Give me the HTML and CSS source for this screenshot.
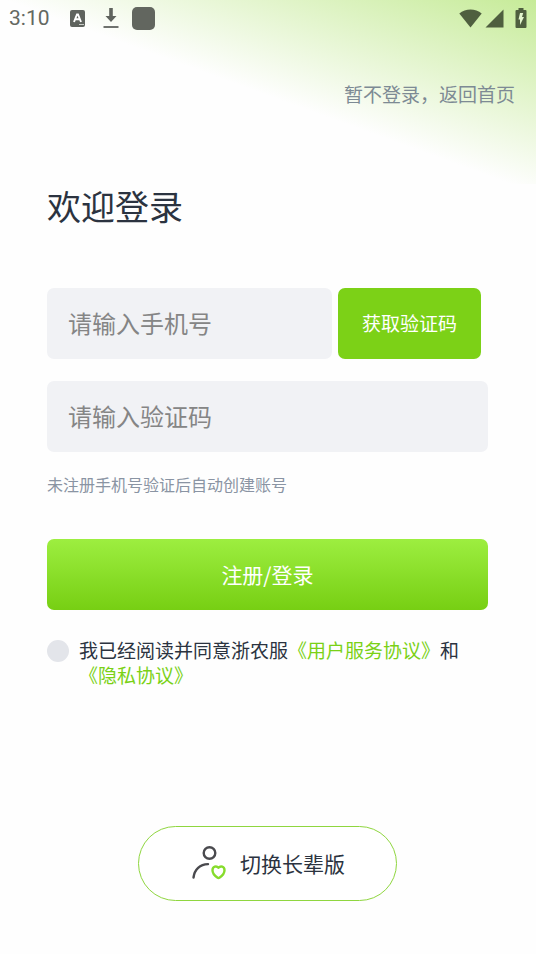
FILE: index.html
```html
<!DOCTYPE html>
<html lang="zh-CN">
<head>
<meta charset="utf-8">
<meta name="viewport" content="width=device-width, initial-scale=1">
<title>欢迎登录</title>
<link rel="stylesheet" href="styles.css">
</head>
<body>
<div class="page">
  <div class="status">
    <span class="status-time">3:10</span>
    <svg class="status-lang" width="15" height="17" viewBox="0 0 15 17" aria-hidden="true">
      <rect width="15" height="17" rx="2" fill="#5f635e"/>
      <path d="M4 12 7 4.500H8L11 12M5.300 9.300H9.700" fill="none" stroke="#fff" stroke-width="1.900"/>
      <path d="M9 14.500H14" stroke="#c8ccc6" stroke-width="1"/>
    </svg>
    <svg class="status-download" width="16" height="22" viewBox="0 0 16 22" aria-hidden="true">
      <path d="M6.200 1H9.800V9H13.500L8 15 2.500 9H6.200Z" fill="#5f635e"/>
      <path d="M.5 20H15.500" stroke="#5f635e" stroke-width="1.800"/>
    </svg>
    <span class="status-app"></span>
    <svg class="status-wifi" width="23" height="19" viewBox="0 0 23 19" aria-hidden="true">
      <path d="M.3 4.500C6.500-.7 16.500-.7 22.700 4.500L11.500 18.500Z" fill="#4f5f3f"/>
    </svg>
    <svg class="status-signal" width="19" height="19" viewBox="0 0 19 19" aria-hidden="true">
      <path d="M18.500.5V18.500H.5Z" fill="#4f5f3f"/>
    </svg>
    <svg class="status-battery" width="12" height="20" viewBox="0 0 12 20" aria-hidden="true">
      <path d="M3.500 0H8.500V2H10.500Q11.500 2 11.500 3V19Q11.500 20 10.500 20H1.500Q.5 20 .5 19V3Q.5 2 1.500 2H3.500Z" fill="#4f5f3f"/>
      <path d="M5 5H8.200L7 9H9L5 17V11.500H3.500Z" fill="#e3f5cd"/>
    </svg>
  </div>

  <nav class="skip"><a href="#">暂不登录，返回首页</a></nav>

  <main class="main">
    <h1 class="title">欢迎登录</h1>
    <form class="form">
      <div class="phone-row">
        <input class="field" type="tel" placeholder="请输入手机号" aria-label="手机号">
        <button class="code-button" type="button">获取验证码</button>
      </div>
      <input class="field" type="text" placeholder="请输入验证码" aria-label="验证码">
      <p class="hint">未注册手机号验证后自动创建账号</p>
      <button class="submit" type="submit">注册/登录</button>
      <div class="agree">
        <input class="agree-box" type="checkbox" id="agree">
        <label class="agree-text" for="agree">我已经阅读并同意浙农服<a href="#">《用户服务协议》</a>和<a href="#">《隐私协议》</a></label>
      </div>
    </form>
    <button class="switch" type="button">
      <svg width="34" height="34" viewBox="0 0 34 34" fill="none" stroke-linecap="round" aria-hidden="true">
        <circle cx="17.500" cy="7" r="5.800" stroke="#4a4a4e" stroke-width="2.400"/>
        <path d="M1.500 31.500C2.500 23.500 8 18.300 16 18.100" stroke="#4a4a4e" stroke-width="2.400"/>
        <path d="M26.500 21.800C24.500 19.500 20.500 20.300 20.500 24.300C20.500 27.800 23 30 25.300 31.600Q26.500 32.400 27.700 31.600C30 30 32.500 27.800 32.500 24.300C32.500 20.300 28.500 19.500 26.500 21.800Z" stroke="#86dc2c" stroke-width="2.400" stroke-linejoin="round"/>
      </svg>
      <span>切换长辈版</span>
    </button>
  </main>
</div>
</body>
</html>
```
FILE: styles.css
```css
* {
  box-sizing: border-box;
}

body {
  margin: 0;
  background: #fefefe;
  color: #2b3340;
  font-family: "Noto Sans CJK SC", sans-serif;
}

button,
input {
  margin: 0;
  border: 0;
  font: inherit;
}

button {
  padding: 0 0 2px;
}

a {
  color: #7ad116;
  text-decoration: none;
}

.page {
  min-height: 100vh;
  background: linear-gradient(20deg, transparent 49%, #c6eb98 100%) top / 100% 184px no-repeat;
}

.status {
  display: flex;
  align-items: center;
  height: 36px;
  padding: 0 9px;
}

.status-time {
  color: #646862;
  font: 21px/36px Roboto, sans-serif;
}

.status-lang {
  margin-left: 20px;
}

.status-download {
  margin-left: 18px;
}

.status-app {
  width: 23px;
  height: 23px;
  margin-left: 13px;
  border-radius: 5px;
  background: #62665f;
}

.status-wifi {
  margin-left: auto;
}

.status-signal {
  margin-left: 3px;
}

.status-battery {
  margin-left: 11px;
}

.skip {
  padding: 44px 21px 0;
  font-size: 19px;
  line-height: 28px;
  text-align: right;
}

.skip a {
  color: #7d8a94;
}

.main {
  display: flex;
  flex-direction: column;
  padding: 73px 48px 54px 47px;
}

.title {
  margin: 0;
  font-size: 34px;
  font-weight: 400;
  line-height: 50px;
}

.form {
  display: flex;
  flex-direction: column;
  padding-top: 57px;
}

.phone-row {
  display: flex;
  gap: 6px;
  margin-bottom: 22px;
  padding-right: 7px;
}

.field {
  width: 100%;
  min-width: 0;
  height: 71px;
  padding: 0 21px 2px;
  border-radius: 7px;
  background: #f1f2f5;
  color: #2b3340;
  font-size: 24px;
}

.field::placeholder {
  color: #858585;
  opacity: 1;
}

.phone-row .field {
  flex: 1;
}

.code-button {
  width: 143px;
  border-radius: 7px;
  background: #7cd117;
  color: #fff;
  font-size: 19px;
}

.hint {
  margin: 20px 0 42px;
  color: #8a94a3;
  font-size: 16px;
  line-height: 25px;
}

.submit {
  height: 71px;
  border-radius: 7px;
  background: linear-gradient(#9dee40, #77cf13);
  color: #fff;
  font-size: 21px;
}

.agree {
  display: flex;
  align-items: flex-start;
  gap: 10px;
  margin-top: 27px;
}

.agree-box {
  flex: none;
  width: 22px;
  height: 22px;
  margin-top: 3px;
  border-radius: 50%;
  background: #e3e5ea;
  appearance: none;
}

.agree-box:checked {
  background: #7cd117;
}

.agree-text {
  font-size: 19px;
  line-height: 25px;
}

.switch {
  display: flex;
  align-items: center;
  align-self: center;
  gap: 14px;
  height: 75px;
  margin-top: 139px;
  padding: 0 51px 2px 53px;
  border: 1px solid #8fd63f;
  border-radius: 38px;
  background: #fff;
  color: #2b3340;
  font-size: 21px;
}
```
